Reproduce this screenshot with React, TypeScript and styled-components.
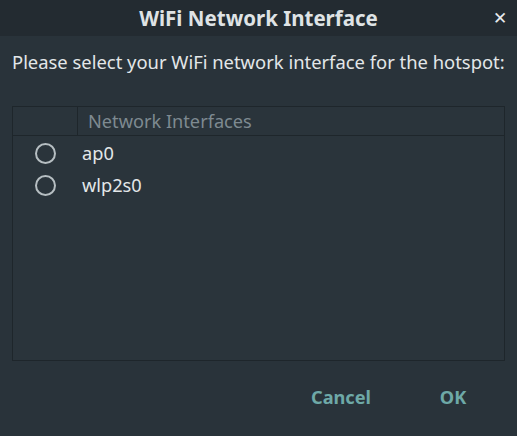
import React, { useState } from "react";
import styled, { createGlobalStyle } from "styled-components";

const Global = createGlobalStyle`
  html, body { margin: 0; padding: 0; background: #28323a; }
  body { font-family: "Noto Sans", "Open Sans", sans-serif; }
  * { box-sizing: border-box; }
`;

const Dialog = styled.div`
  width: 517px;
  height: 436px;
  background: #29333a;
  display: flex;
  flex-direction: column;
  color: #e3e7e9;
`;

const TitleBar = styled.div`
  height: 36px;
  background: #232b31;
  display: grid;
  grid-template-columns: 34px 1fr 34px;
  align-items: center;
`;

const Title = styled.div`
  grid-column: 2;
  text-align: center;
  font-weight: 700;
  font-size: 20.5px;
  line-height: 36px;
  color: #dfe3e5;
`;

const Close = styled.button`
  grid-column: 3;
  background: none;
  border: none;
  color: #e6eaec;
  font-size: 17px;
  padding: 0;
  cursor: pointer;
  display: flex;
  justify-content: center;
  align-items: center;
`;

const Body = styled.div`
  display: flex;
  flex-direction: column;
  padding: 14px 12px 0 12px;
`;

const Prompt = styled.div`
  font-size: 18.4px;
  line-height: 24px;
  height: 24px;
  color: #e3e7e9;
  margin-bottom: 32px;
  white-space: nowrap;
`;

const ListBox = styled.div`
  width: 493px;
  height: 255px;
  border: 1px solid #1e262b;
  background: #2a343b;
  display: flex;
  flex-direction: column;
`;

const HeaderRow = styled.div`
  display: grid;
  grid-template-columns: 64px 1fr;
  height: 29px;
  border-bottom: 1px solid #1e262b;
`;

const HeaderCell = styled.div<{ $divider?: boolean }>`
  border-left: ${(p) => (p.$divider ? "1px solid #1e262b" : "none")};
  color: #7e8a91;
  font-size: 18.2px;
  display: flex;
  align-items: center;
  padding-left: 10px;
`;

const Rows = styled.div`
  padding-top: 1px;
`;

const Row = styled.label`
  display: grid;
  grid-template-columns: 69px 1fr;
  height: 32px;
  align-items: center;
  cursor: pointer;
`;

const Radio = styled.span<{ $checked?: boolean }>`
  width: 21px;
  height: 21px;
  margin-left: 22px;
  border-radius: 50%;
  border: 2px solid #b6bec2;
  display: flex;
  align-items: center;
  justify-content: center;
  &::after {
    content: "";
    width: 9px;
    height: 9px;
    border-radius: 50%;
    background: ${(p) => (p.$checked ? "#b6bec2" : "transparent")};
  }
`;

const RowText = styled.span`
  font-size: 18.2px;
  color: #e3e7e9;
`;

const Footer = styled.div`
  flex: 1;
  display: flex;
  justify-content: flex-end;
  align-items: center;
  padding-right: 8px;
  padding-bottom: 3px;
`;

const Btn = styled.button`
  background: none;
  border: none;
  font-family: inherit;
  font-weight: 700;
  font-size: 18.2px;
  color: #6ea9a7;
  width: 112px;
  height: 40px;
  cursor: pointer;
`;

const items = ["ap0", "wlp2s0"];

export default function App() {
  const [sel, setSel] = useState<string | null>(null);
  return (
    <>
      <Global />
      <Dialog>
        <TitleBar>
          <Title>WiFi Network Interface</Title>
          <Close aria-label="close">✕</Close>
        </TitleBar>
        <Body>
          <Prompt>Please select your WiFi network interface for the hotspot:</Prompt>
          <ListBox>
            <HeaderRow>
              <HeaderCell />
              <HeaderCell $divider>Network Interfaces</HeaderCell>
            </HeaderRow>
            <Rows>
              {items.map((it) => (
                <Row key={it} onClick={() => setSel(it)}>
                  <Radio $checked={sel === it} />
                  <RowText>{it}</RowText>
                </Row>
              ))}
            </Rows>
          </ListBox>
        </Body>
        <Footer>
          <Btn>Cancel</Btn>
          <Btn>OK</Btn>
        </Footer>
      </Dialog>
    </>
  );
}
